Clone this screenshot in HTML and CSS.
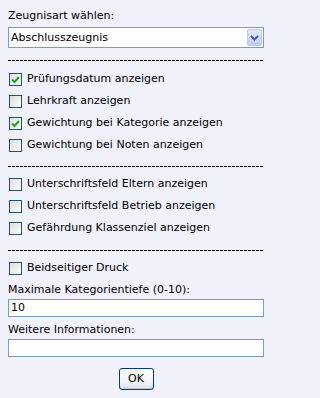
FILE: index.html
```html
<!DOCTYPE html>
<html lang="de">
<head>
<meta charset="utf-8">
<title>Zeugnis</title>
<link rel="stylesheet" href="styles.css">
</head>
<body>
<div class="dialog">
  <div class="label">Zeugnisart wählen:</div>
  <div class="select">
    <span class="select-text">Abschlusszeugnis</span>
    <span class="select-btn">
      <svg width="9" height="6" viewBox="0 0 9 6"><path d="M1 1 L4.5 4.5 L8 1" fill="none" stroke="#4d6185" stroke-width="2"/></svg>
    </span>
  </div>
  <div class="dash dash-first"></div>
  <div class="row"><span class="cb checked"><svg width="9" height="8" viewBox="0 0 9 8"><path d="M1 3.5 L3.5 6 L8 1" fill="none" stroke="#21a121" stroke-width="2"/></svg></span><span class="text">Prüfungsdatum anzeigen</span></div>
  <div class="row"><span class="cb"></span><span class="text">Lehrkraft anzeigen</span></div>
  <div class="row"><span class="cb checked"><svg width="9" height="8" viewBox="0 0 9 8"><path d="M1 3.5 L3.5 6 L8 1" fill="none" stroke="#21a121" stroke-width="2"/></svg></span><span class="text">Gewichtung bei Kategorie anzeigen</span></div>
  <div class="row"><span class="cb"></span><span class="text">Gewichtung bei Noten anzeigen</span></div>
  <div class="dash"></div>
  <div class="row"><span class="cb"></span><span class="text">Unterschriftsfeld Eltern anzeigen</span></div>
  <div class="row"><span class="cb"></span><span class="text">Unterschriftsfeld Betrieb anzeigen</span></div>
  <div class="row"><span class="cb"></span><span class="text">Gefährdung Klassenziel anzeigen</span></div>
  <div class="dash dash-last"></div>
  <div class="row"><span class="cb"></span><span class="text">Beidseitiger Druck</span></div>
  <div class="label label-field">Maximale Kategorientiefe (0-10):</div>
  <div class="input">10</div>
  <div class="label label-field2">Weitere Informationen:</div>
  <div class="input"></div>
  <div class="actions"><span class="btn">OK</span></div>
</div>
</body>
</html>
```
FILE: styles.css
```css
html, body {
  margin: 0;
  padding: 0;
  background: #f1f1fc;
}
body {
  font-family: "DejaVu Sans", sans-serif;
  font-size: 11px;
  color: #000;
}
.dialog {
  width: 256px;
  padding: 9px 8px 0 8px;
  display: flex;
  flex-direction: column;
}
.label {
  line-height: 14px;
  height: 14px;
  white-space: nowrap;
}
.select {
  margin-top: 4px;
  height: 21px;
  box-sizing: border-box;
  border: 1px solid #7f9db9;
  background: #fff;
  display: flex;
  align-items: center;
  justify-content: space-between;
  padding: 0 1px 0 2px;
}
.select-text {
  line-height: 14px;
}
.select-btn {
  width: 15px;
  height: 17px;
  box-sizing: border-box;
  border: 1px solid #b9cbf3;
  border-radius: 2px;
  background: linear-gradient(to bottom, #dfe8fd, #bccdf6);
  display: flex;
  align-items: center;
  justify-content: center;
}
.dash {
  height: 1px;
  margin: 9px 0 7px 0;
  background: repeating-linear-gradient(to right, #000 0 3px, transparent 3px 4px);
}
.dash-first {
  margin-top: 12px;
  margin-bottom: 8px;
}
.dash-last {
  margin-top: 10px;
}
.row {
  height: 22px;
  display: flex;
  align-items: flex-start;
  white-space: nowrap;
}
.cb {
  margin: 4px 0 0 1px;
  width: 13px;
  height: 13px;
  box-sizing: border-box;
  border: 1px solid #1c5180;
  background: linear-gradient(135deg, #dcdcd7, #ffffff);
  display: flex;
  align-items: center;
  justify-content: center;
  flex: none;
}
.text {
  margin: 3px 0 0 5px;
  line-height: 14px;
}
.label-field {
  margin-top: 3px;
}
.label-field2 {
  margin-top: 6px;
}
.input {
  margin-top: 2px;
  height: 18px;
  box-sizing: border-box;
  border: 1px solid #7f9db9;
  background: #fff;
  padding: 0 2px;
  line-height: 16px;
}
.actions {
  margin-top: 11px;
  display: flex;
  justify-content: center;
}
.btn {
  width: 35px;
  height: 22px;
  box-sizing: border-box;
  border: 1px solid #003c74;
  border-radius: 3px;
  background: linear-gradient(to bottom, #ffffff, #f1f1f6 70%, #dcdcec);
  box-shadow: inset 0 -1px 0 #c7c7dc, inset 0 1px 0 #fff;
  display: flex;
  align-items: center;
  justify-content: center;
  line-height: 14px;
}
```
